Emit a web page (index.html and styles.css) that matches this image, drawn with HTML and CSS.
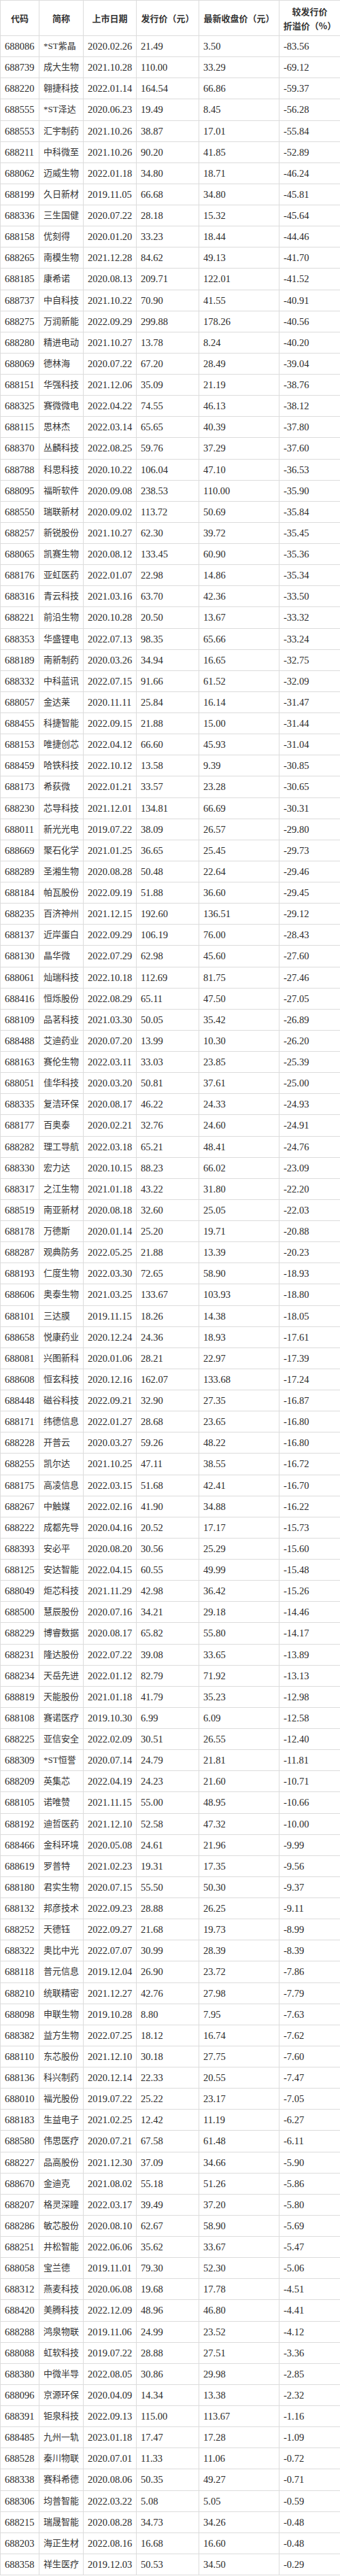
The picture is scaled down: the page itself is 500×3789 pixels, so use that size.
FILE: index.html
```html
<!DOCTYPE html>
<html lang="zh-CN">
<head>
<meta charset="utf-8">
<title>科创板破发股</title>
<link rel="stylesheet" href="styles.css">
</head>
<body>
<table class="tbl">
<colgroup><col class="c1"><col class="c2"><col class="c3"><col class="c4"><col class="c5"><col class="c6"></colgroup>
<thead>
<tr><th>代码</th><th>简称</th><th>上市日期</th><th>发行价（元）</th><th>最新收盘价（元）</th><th>较发行价<br>折溢价（%）</th></tr>
</thead>
<tbody>
<tr><td>688086</td><td class="n">*ST紫晶</td><td>2020.02.26</td><td>21.49</td><td>3.50</td><td>-83.56</td></tr>
<tr><td>688739</td><td class="n">成大生物</td><td>2021.10.28</td><td>110.00</td><td>33.29</td><td>-69.12</td></tr>
<tr><td>688220</td><td class="n">翱捷科技</td><td>2022.01.14</td><td>164.54</td><td>66.86</td><td>-59.37</td></tr>
<tr><td>688555</td><td class="n">*ST泽达</td><td>2020.06.23</td><td>19.49</td><td>8.45</td><td>-56.28</td></tr>
<tr><td>688553</td><td class="n">汇宇制药</td><td>2021.10.26</td><td>38.87</td><td>17.01</td><td>-55.84</td></tr>
<tr><td>688211</td><td class="n">中科微至</td><td>2021.10.26</td><td>90.20</td><td>41.85</td><td>-52.89</td></tr>
<tr><td>688062</td><td class="n">迈威生物</td><td>2022.01.18</td><td>34.80</td><td>18.71</td><td>-46.24</td></tr>
<tr><td>688199</td><td class="n">久日新材</td><td>2019.11.05</td><td>66.68</td><td>34.80</td><td>-45.81</td></tr>
<tr><td>688336</td><td class="n">三生国健</td><td>2020.07.22</td><td>28.18</td><td>15.32</td><td>-45.64</td></tr>
<tr><td>688158</td><td class="n">优刻得</td><td>2020.01.20</td><td>33.23</td><td>18.44</td><td>-44.46</td></tr>
<tr><td>688265</td><td class="n">南模生物</td><td>2021.12.28</td><td>84.62</td><td>49.13</td><td>-41.70</td></tr>
<tr><td>688185</td><td class="n">康希诺</td><td>2020.08.13</td><td>209.71</td><td>122.01</td><td>-41.52</td></tr>
<tr><td>688737</td><td class="n">中自科技</td><td>2021.10.22</td><td>70.90</td><td>41.55</td><td>-40.91</td></tr>
<tr><td>688275</td><td class="n">万润新能</td><td>2022.09.29</td><td>299.88</td><td>178.26</td><td>-40.56</td></tr>
<tr><td>688280</td><td class="n">精进电动</td><td>2021.10.27</td><td>13.78</td><td>8.24</td><td>-40.20</td></tr>
<tr><td>688069</td><td class="n">德林海</td><td>2020.07.22</td><td>67.20</td><td>28.49</td><td>-39.04</td></tr>
<tr><td>688151</td><td class="n">华强科技</td><td>2021.12.06</td><td>35.09</td><td>21.19</td><td>-38.76</td></tr>
<tr><td>688325</td><td class="n">赛微微电</td><td>2022.04.22</td><td>74.55</td><td>46.13</td><td>-38.12</td></tr>
<tr><td>688115</td><td class="n">思林杰</td><td>2022.03.14</td><td>65.65</td><td>40.39</td><td>-37.80</td></tr>
<tr><td>688370</td><td class="n">丛麟科技</td><td>2022.08.25</td><td>59.76</td><td>37.29</td><td>-37.60</td></tr>
<tr><td>688788</td><td class="n">科思科技</td><td>2020.10.22</td><td>106.04</td><td>47.10</td><td>-36.53</td></tr>
<tr><td>688095</td><td class="n">福昕软件</td><td>2020.09.08</td><td>238.53</td><td>110.00</td><td>-35.90</td></tr>
<tr><td>688550</td><td class="n">瑞联新材</td><td>2020.09.02</td><td>113.72</td><td>50.69</td><td>-35.84</td></tr>
<tr><td>688257</td><td class="n">新锐股份</td><td>2021.10.27</td><td>62.30</td><td>39.72</td><td>-35.45</td></tr>
<tr><td>688065</td><td class="n">凯赛生物</td><td>2020.08.12</td><td>133.45</td><td>60.90</td><td>-35.36</td></tr>
<tr><td>688176</td><td class="n">亚虹医药</td><td>2022.01.07</td><td>22.98</td><td>14.86</td><td>-35.34</td></tr>
<tr><td>688316</td><td class="n">青云科技</td><td>2021.03.16</td><td>63.70</td><td>42.36</td><td>-33.50</td></tr>
<tr><td>688221</td><td class="n">前沿生物</td><td>2020.10.28</td><td>20.50</td><td>13.67</td><td>-33.32</td></tr>
<tr><td>688353</td><td class="n">华盛锂电</td><td>2022.07.13</td><td>98.35</td><td>65.66</td><td>-33.24</td></tr>
<tr><td>688189</td><td class="n">南新制药</td><td>2020.03.26</td><td>34.94</td><td>16.65</td><td>-32.75</td></tr>
<tr><td>688332</td><td class="n">中科蓝讯</td><td>2022.07.15</td><td>91.66</td><td>61.52</td><td>-32.09</td></tr>
<tr><td>688057</td><td class="n">金达莱</td><td>2020.11.11</td><td>25.84</td><td>16.14</td><td>-31.47</td></tr>
<tr><td>688455</td><td class="n">科捷智能</td><td>2022.09.15</td><td>21.88</td><td>15.00</td><td>-31.44</td></tr>
<tr><td>688153</td><td class="n">唯捷创芯</td><td>2022.04.12</td><td>66.60</td><td>45.93</td><td>-31.04</td></tr>
<tr><td>688459</td><td class="n">哈铁科技</td><td>2022.10.12</td><td>13.58</td><td>9.39</td><td>-30.85</td></tr>
<tr><td>688173</td><td class="n">希荻微</td><td>2022.01.21</td><td>33.57</td><td>23.28</td><td>-30.65</td></tr>
<tr><td>688230</td><td class="n">芯导科技</td><td>2021.12.01</td><td>134.81</td><td>66.69</td><td>-30.31</td></tr>
<tr><td>688011</td><td class="n">新光光电</td><td>2019.07.22</td><td>38.09</td><td>26.57</td><td>-29.80</td></tr>
<tr><td>688669</td><td class="n">聚石化学</td><td>2021.01.25</td><td>36.65</td><td>25.45</td><td>-29.73</td></tr>
<tr><td>688289</td><td class="n">圣湘生物</td><td>2020.08.28</td><td>50.48</td><td>22.64</td><td>-29.46</td></tr>
<tr><td>688184</td><td class="n">帕瓦股份</td><td>2022.09.19</td><td>51.88</td><td>36.60</td><td>-29.45</td></tr>
<tr><td>688235</td><td class="n">百济神州</td><td>2021.12.15</td><td>192.60</td><td>136.51</td><td>-29.12</td></tr>
<tr><td>688137</td><td class="n">近岸蛋白</td><td>2022.09.29</td><td>106.19</td><td>76.00</td><td>-28.43</td></tr>
<tr><td>688130</td><td class="n">晶华微</td><td>2022.07.29</td><td>62.98</td><td>45.60</td><td>-27.60</td></tr>
<tr><td>688061</td><td class="n">灿瑞科技</td><td>2022.10.18</td><td>112.69</td><td>81.75</td><td>-27.46</td></tr>
<tr><td>688416</td><td class="n">恒烁股份</td><td>2022.08.29</td><td>65.11</td><td>47.50</td><td>-27.05</td></tr>
<tr><td>688109</td><td class="n">品茗科技</td><td>2021.03.30</td><td>50.05</td><td>35.42</td><td>-26.89</td></tr>
<tr><td>688488</td><td class="n">艾迪药业</td><td>2020.07.20</td><td>13.99</td><td>10.30</td><td>-26.20</td></tr>
<tr><td>688163</td><td class="n">赛伦生物</td><td>2022.03.11</td><td>33.03</td><td>23.85</td><td>-25.39</td></tr>
<tr><td>688051</td><td class="n">佳华科技</td><td>2020.03.20</td><td>50.81</td><td>37.61</td><td>-25.00</td></tr>
<tr><td>688335</td><td class="n">复洁环保</td><td>2020.08.17</td><td>46.22</td><td>24.33</td><td>-24.93</td></tr>
<tr><td>688177</td><td class="n">百奥泰</td><td>2020.02.21</td><td>32.76</td><td>24.60</td><td>-24.91</td></tr>
<tr><td>688282</td><td class="n">理工导航</td><td>2022.03.18</td><td>65.21</td><td>48.41</td><td>-24.76</td></tr>
<tr><td>688330</td><td class="n">宏力达</td><td>2020.10.15</td><td>88.23</td><td>66.02</td><td>-23.09</td></tr>
<tr><td>688317</td><td class="n">之江生物</td><td>2021.01.18</td><td>43.22</td><td>31.80</td><td>-22.20</td></tr>
<tr><td>688519</td><td class="n">南亚新材</td><td>2020.08.18</td><td>32.60</td><td>25.05</td><td>-22.03</td></tr>
<tr><td>688178</td><td class="n">万德斯</td><td>2020.01.14</td><td>25.20</td><td>19.71</td><td>-20.88</td></tr>
<tr><td>688287</td><td class="n">观典防务</td><td>2022.05.25</td><td>21.88</td><td>13.39</td><td>-20.23</td></tr>
<tr><td>688193</td><td class="n">仁度生物</td><td>2022.03.30</td><td>72.65</td><td>58.90</td><td>-18.93</td></tr>
<tr><td>688606</td><td class="n">奥泰生物</td><td>2021.03.25</td><td>133.67</td><td>103.93</td><td>-18.80</td></tr>
<tr><td>688101</td><td class="n">三达膜</td><td>2019.11.15</td><td>18.26</td><td>14.38</td><td>-18.05</td></tr>
<tr><td>688658</td><td class="n">悦康药业</td><td>2020.12.24</td><td>24.36</td><td>18.93</td><td>-17.61</td></tr>
<tr><td>688081</td><td class="n">兴图新科</td><td>2020.01.06</td><td>28.21</td><td>22.97</td><td>-17.39</td></tr>
<tr><td>688608</td><td class="n">恒玄科技</td><td>2020.12.16</td><td>162.07</td><td>133.68</td><td>-17.24</td></tr>
<tr><td>688448</td><td class="n">磁谷科技</td><td>2022.09.21</td><td>32.90</td><td>27.35</td><td>-16.87</td></tr>
<tr><td>688171</td><td class="n">纬德信息</td><td>2022.01.27</td><td>28.68</td><td>23.65</td><td>-16.80</td></tr>
<tr><td>688228</td><td class="n">开普云</td><td>2020.03.27</td><td>59.26</td><td>48.22</td><td>-16.80</td></tr>
<tr><td>688255</td><td class="n">凯尔达</td><td>2021.10.25</td><td>47.11</td><td>38.55</td><td>-16.72</td></tr>
<tr><td>688175</td><td class="n">高凌信息</td><td>2022.03.15</td><td>51.68</td><td>42.41</td><td>-16.70</td></tr>
<tr><td>688267</td><td class="n">中触媒</td><td>2022.02.16</td><td>41.90</td><td>34.88</td><td>-16.22</td></tr>
<tr><td>688222</td><td class="n">成都先导</td><td>2020.04.16</td><td>20.52</td><td>17.17</td><td>-15.73</td></tr>
<tr><td>688393</td><td class="n">安必平</td><td>2020.08.20</td><td>30.56</td><td>25.29</td><td>-15.60</td></tr>
<tr><td>688125</td><td class="n">安达智能</td><td>2022.04.15</td><td>60.55</td><td>49.99</td><td>-15.48</td></tr>
<tr><td>688049</td><td class="n">炬芯科技</td><td>2021.11.29</td><td>42.98</td><td>36.42</td><td>-15.26</td></tr>
<tr><td>688500</td><td class="n">慧辰股份</td><td>2020.07.16</td><td>34.21</td><td>29.18</td><td>-14.46</td></tr>
<tr><td>688229</td><td class="n">博睿数据</td><td>2020.08.17</td><td>65.82</td><td>55.80</td><td>-14.17</td></tr>
<tr><td>688231</td><td class="n">隆达股份</td><td>2022.07.22</td><td>39.08</td><td>33.65</td><td>-13.89</td></tr>
<tr><td>688234</td><td class="n">天岳先进</td><td>2022.01.12</td><td>82.79</td><td>71.92</td><td>-13.13</td></tr>
<tr><td>688819</td><td class="n">天能股份</td><td>2021.01.18</td><td>41.79</td><td>35.23</td><td>-12.98</td></tr>
<tr><td>688108</td><td class="n">赛诺医疗</td><td>2019.10.30</td><td>6.99</td><td>6.09</td><td>-12.58</td></tr>
<tr><td>688225</td><td class="n">亚信安全</td><td>2022.02.09</td><td>30.51</td><td>26.55</td><td>-12.40</td></tr>
<tr><td>688309</td><td class="n">*ST恒誉</td><td>2020.07.14</td><td>24.79</td><td>21.81</td><td>-11.81</td></tr>
<tr><td>688209</td><td class="n">英集芯</td><td>2022.04.19</td><td>24.23</td><td>21.60</td><td>-10.71</td></tr>
<tr><td>688105</td><td class="n">诺唯赞</td><td>2021.11.15</td><td>55.00</td><td>48.95</td><td>-10.66</td></tr>
<tr><td>688192</td><td class="n">迪哲医药</td><td>2021.12.10</td><td>52.58</td><td>47.32</td><td>-10.00</td></tr>
<tr><td>688466</td><td class="n">金科环境</td><td>2020.05.08</td><td>24.61</td><td>21.96</td><td>-9.99</td></tr>
<tr><td>688619</td><td class="n">罗普特</td><td>2021.02.23</td><td>19.31</td><td>17.35</td><td>-9.56</td></tr>
<tr><td>688180</td><td class="n">君实生物</td><td>2020.07.15</td><td>55.50</td><td>50.30</td><td>-9.37</td></tr>
<tr><td>688132</td><td class="n">邦彦技术</td><td>2022.09.23</td><td>28.88</td><td>26.25</td><td>-9.11</td></tr>
<tr><td>688252</td><td class="n">天德钰</td><td>2022.09.27</td><td>21.68</td><td>19.73</td><td>-8.99</td></tr>
<tr><td>688322</td><td class="n">奥比中光</td><td>2022.07.07</td><td>30.99</td><td>28.39</td><td>-8.39</td></tr>
<tr><td>688118</td><td class="n">普元信息</td><td>2019.12.04</td><td>26.90</td><td>23.72</td><td>-7.86</td></tr>
<tr><td>688210</td><td class="n">统联精密</td><td>2021.12.27</td><td>42.76</td><td>27.98</td><td>-7.79</td></tr>
<tr><td>688098</td><td class="n">申联生物</td><td>2019.10.28</td><td>8.80</td><td>7.95</td><td>-7.63</td></tr>
<tr><td>688382</td><td class="n">益方生物</td><td>2022.07.25</td><td>18.12</td><td>16.74</td><td>-7.62</td></tr>
<tr><td>688110</td><td class="n">东芯股份</td><td>2021.12.10</td><td>30.18</td><td>27.75</td><td>-7.60</td></tr>
<tr><td>688136</td><td class="n">科兴制药</td><td>2020.12.14</td><td>22.33</td><td>20.55</td><td>-7.47</td></tr>
<tr><td>688010</td><td class="n">福光股份</td><td>2019.07.22</td><td>25.22</td><td>23.17</td><td>-7.05</td></tr>
<tr><td>688183</td><td class="n">生益电子</td><td>2021.02.25</td><td>12.42</td><td>11.19</td><td>-6.27</td></tr>
<tr><td>688580</td><td class="n">伟思医疗</td><td>2020.07.21</td><td>67.58</td><td>61.48</td><td>-6.11</td></tr>
<tr><td>688227</td><td class="n">品高股份</td><td>2021.12.30</td><td>37.09</td><td>34.66</td><td>-5.90</td></tr>
<tr><td>688670</td><td class="n">金迪克</td><td>2021.08.02</td><td>55.18</td><td>51.26</td><td>-5.86</td></tr>
<tr><td>688207</td><td class="n">格灵深瞳</td><td>2022.03.17</td><td>39.49</td><td>37.20</td><td>-5.80</td></tr>
<tr><td>688286</td><td class="n">敏芯股份</td><td>2020.08.10</td><td>62.67</td><td>58.90</td><td>-5.69</td></tr>
<tr><td>688251</td><td class="n">井松智能</td><td>2022.06.06</td><td>35.62</td><td>33.67</td><td>-5.47</td></tr>
<tr><td>688058</td><td class="n">宝兰德</td><td>2019.11.01</td><td>79.30</td><td>52.30</td><td>-5.06</td></tr>
<tr><td>688312</td><td class="n">燕麦科技</td><td>2020.06.08</td><td>19.68</td><td>17.78</td><td>-4.51</td></tr>
<tr><td>688420</td><td class="n">美腾科技</td><td>2022.12.09</td><td>48.96</td><td>46.80</td><td>-4.41</td></tr>
<tr><td>688288</td><td class="n">鸿泉物联</td><td>2019.11.06</td><td>24.99</td><td>23.52</td><td>-4.12</td></tr>
<tr><td>688088</td><td class="n">虹软科技</td><td>2019.07.22</td><td>28.88</td><td>27.51</td><td>-3.36</td></tr>
<tr><td>688380</td><td class="n">中微半导</td><td>2022.08.05</td><td>30.86</td><td>29.98</td><td>-2.85</td></tr>
<tr><td>688096</td><td class="n">京源环保</td><td>2020.04.09</td><td>14.34</td><td>13.38</td><td>-2.32</td></tr>
<tr><td>688391</td><td class="n">钜泉科技</td><td>2022.09.13</td><td>115.00</td><td>113.67</td><td>-1.16</td></tr>
<tr><td>688485</td><td class="n">九州一轨</td><td>2023.01.18</td><td>17.47</td><td>17.28</td><td>-1.09</td></tr>
<tr><td>688528</td><td class="n">秦川物联</td><td>2020.07.01</td><td>11.33</td><td>11.06</td><td>-0.72</td></tr>
<tr><td>688338</td><td class="n">赛科希德</td><td>2020.08.06</td><td>50.35</td><td>49.27</td><td>-0.71</td></tr>
<tr><td>688306</td><td class="n">均普智能</td><td>2022.03.22</td><td>5.08</td><td>5.05</td><td>-0.59</td></tr>
<tr><td>688215</td><td class="n">瑞晟智能</td><td>2020.08.28</td><td>34.73</td><td>34.26</td><td>-0.48</td></tr>
<tr><td>688203</td><td class="n">海正生材</td><td>2022.08.16</td><td>16.68</td><td>16.60</td><td>-0.48</td></tr>
<tr><td>688358</td><td class="n">祥生医疗</td><td>2019.12.03</td><td>50.53</td><td>34.50</td><td>-0.29</td></tr>
</tbody>
</table>
</body>
</html>
```

FILE: styles.css
```css
html, body {
  margin: 0;
  padding: 0;
  background: #ffffff;
}

.tbl {
  width: 500px;
  table-layout: fixed;
  border-collapse: collapse;
  font-family: "Liberation Serif", "Noto Sans CJK SC", serif;
  color: #2a2a2a;
}

.c1 { width: 57px; }
.c2 { width: 65px; }
.c3 { width: 78px; }
.c4 { width: 92px; }
.c5 { width: 118px; }
.c6 { width: 90px; }

.tbl th,
.tbl td {
  border: 1px solid #dcdcdc;
  padding: 0 0 0 6px;
  white-space: nowrap;
  overflow: hidden;
  vertical-align: middle;
}

.tbl thead tr {
  height: 52px;
}

.tbl th {
  padding: 0;
  text-align: center;
  font-family: "Noto Sans CJK SC", sans-serif;
  font-weight: 700;
  font-size: 13px;
  line-height: 21px;
  color: #333333;
}

.tbl tbody tr {
  height: 31.13px;
}

.tbl td {
  font-size: 14.5px;
  line-height: 18px;
  text-align: left;
}

.tbl td.n {
  font-family: "Liberation Serif", "Noto Sans CJK SC", serif;
  font-size: 13px;
  color: #333333;
}
```
